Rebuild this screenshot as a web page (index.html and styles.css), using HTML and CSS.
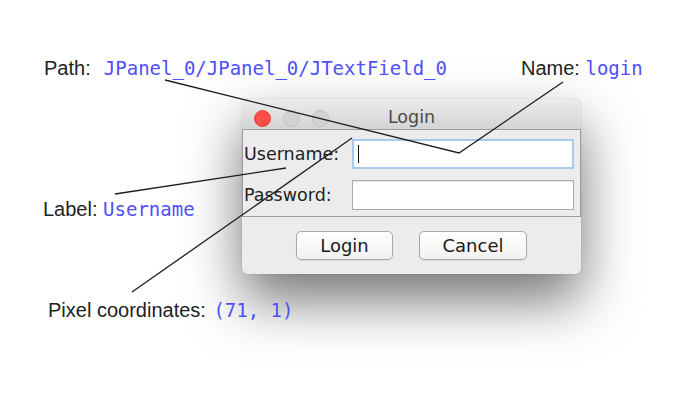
FILE: index.html
```html
<!DOCTYPE html>
<html>
<head>
    <meta charset="utf-8">
    <title>Login component annotations</title>
    <link rel="stylesheet" href="styles.css">
</head>
<body>
    <div class="canvas">
        <div class="window">
            <div class="titlebar">
                <div class="lights">
                    <span class="light close"></span>
                    <span class="light"></span>
                    <span class="light"></span>
                </div>
                <div class="title">Login</div>
            </div>
            <div class="panel">
                <div class="row">
                    <label class="field-label" for="username">Username:</label>
                    <div class="field focused"><span class="caret"></span></div>
                </div>
                <div class="row">
                    <label class="field-label" for="password">Password:</label>
                    <div class="field"></div>
                </div>
            </div>
            <div class="buttons">
                <button class="btn btn-login">Login</button>
                <button class="btn btn-cancel">Cancel</button>
            </div>
        </div>

        <svg class="lines" width="691" height="412" viewBox="0 0 691 412">
            <polyline points="165,80 459,153 563,82" />
            <line x1="115" y1="194" x2="286" y2="168" />
            <line x1="132" y1="292" x2="352" y2="138" />
        </svg>

        <div class="note note-path">Path:&nbsp; <span class="code">JPanel_0/JPanel_0/JTextField_0</span></div>
        <div class="note note-name">Name: <span class="code">login</span></div>
        <div class="note note-label">Label: <span class="code">Username</span></div>
        <div class="note note-pixel">Pixel coordinates: <span class="code">(71, 1)</span></div>
    </div>
</body>
</html>
```

FILE: styles.css
```css
body {
    margin: 0;
    background: #ffffff;
    font-family: "Liberation Sans", Arial, sans-serif;
}

.canvas {
    position: relative;
    width: 691px;
    height: 412px;
    overflow: hidden;
}

/* dialog window */
.window {
    position: absolute;
    left: 242px;
    top: 99px;
    width: 339px;
    height: 175px;
    display: flex;
    flex-direction: column;
    background: #ececec;
    border-radius: 5px;
    box-shadow: 0 26px 55px rgba(0, 0, 0, 0.55), 0 0 1px rgba(0, 0, 0, 0.4);
    font-family: "DejaVu Sans", sans-serif;
    color: #222;
}

.titlebar {
    height: 31px;
    box-sizing: border-box;
    padding-top: 8px;
    display: flex;
    align-items: center;
    position: relative;
    background: linear-gradient(#ececec, #d4d4d4);
    border-bottom: 1px solid #9e9e9e;
    border-radius: 5px 5px 0 0;
}

.lights {
    display: flex;
    gap: 12px;
    padding-left: 12px;
}

.light {
    width: 17px;
    height: 17px;
    border-radius: 50%;
    box-sizing: border-box;
    background: #d2d2d2;
    border: 1px solid #c3c3c3;
}

.light.close {
    background: #fc4d4a;
    border-color: #e8413e;
}

.title {
    position: absolute;
    left: 0;
    right: 0;
    top: 8px;
    text-align: center;
    font-size: 17.5px;
    color: #4a4a4a;
}

.panel {
    height: 87px;
    box-sizing: border-box;
    border: 1px solid #9d9d9d;
    border-top: none;
    padding: 9px 5px 5px 0;
    display: flex;
    flex-direction: column;
    gap: 11px;
}

.row {
    display: flex;
    align-items: center;
}

.field-label {
    width: 109px;
    font-size: 17.5px;
    padding-left: 1px;
    box-sizing: border-box;
}

.field {
    width: 222px;
    height: 30px;
    box-sizing: border-box;
    background: #fff;
    border: 1px solid #ababab;
    box-shadow: inset 0 1px 1px rgba(0, 0, 0, 0.12);
    display: flex;
    align-items: center;
}

.field.focused {
    border: 2px solid #a6c9ec;
    box-shadow: none;
}

.caret {
    width: 1px;
    height: 18px;
    margin-left: 4px;
    background: #111;
}

.buttons {
    flex: 1;
    display: flex;
    justify-content: center;
    align-items: flex-start;
    gap: 26px;
    padding-top: 14px;
}

.btn {
    height: 29px;
    font-family: "DejaVu Sans", sans-serif;
    font-size: 18px;
    color: #1a1a1a;
    background: linear-gradient(#ffffff, #f1f1f1);
    border: 1px solid #a8a8a8;
    border-radius: 5px;
    box-shadow: 0 1px 1px rgba(0, 0, 0, 0.08);
    padding: 0;
}

.btn-login {
    width: 97px;
}

.btn-cancel {
    width: 108px;
}

/* annotation lines and notes */
.lines {
    position: absolute;
    left: 0;
    top: 0;
}

.lines polyline,
.lines line {
    fill: none;
    stroke: #1e1e1e;
    stroke-width: 1.3;
}

.note {
    position: absolute;
    font-size: 20px;
    line-height: 24px;
    color: #222;
    white-space: nowrap;
}

.code {
    font-family: "DejaVu Sans Mono", monospace;
    font-size: 19px;
    color: #4f4ffa;
}

.note-path {
    left: 44px;
    top: 56px;
}

.note-path .code {
    margin-left: 2px;
}

.note-name {
    left: 521px;
    top: 56px;
}

.note-label {
    left: 43px;
    top: 197px;
}

.note-pixel {
    left: 48px;
    top: 298px;
}

.note-pixel .code {
    margin-left: 2px;
}
```
